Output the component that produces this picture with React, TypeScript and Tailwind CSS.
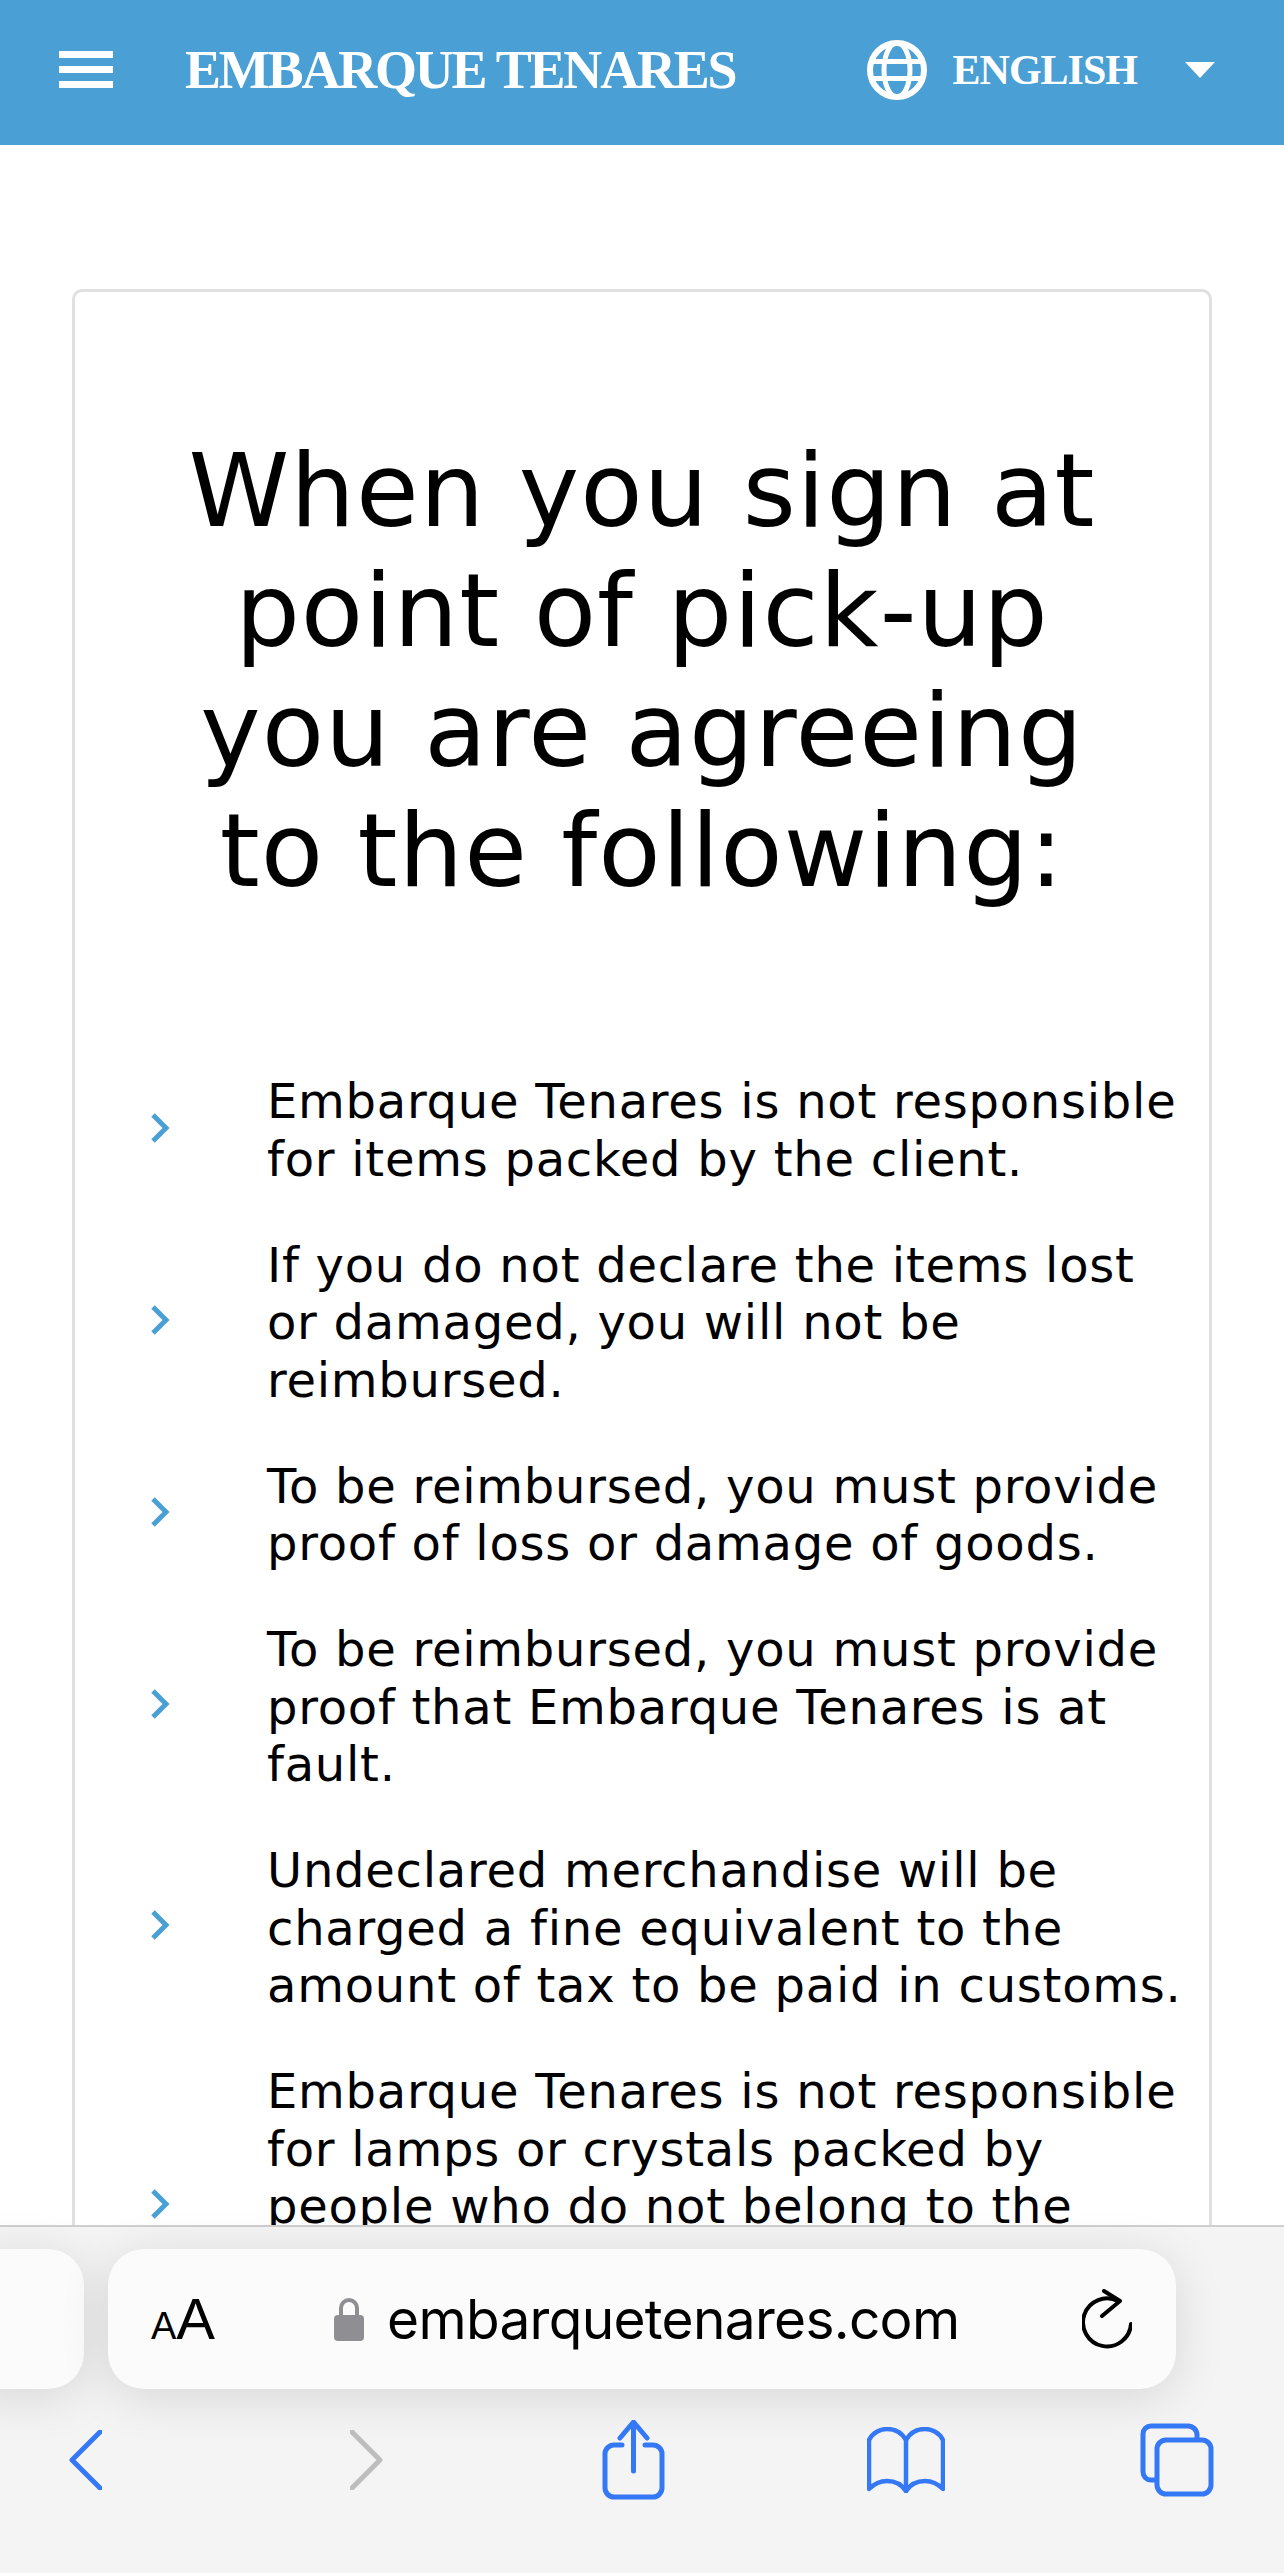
const terms = [
  'Embarque Tenares is not responsible for items packed by the client.',
  'If you do not declare the items lost or damaged, you will not be reimbursed.',
  'To be reimbursed, you must provide proof of loss or damage of goods.',
  'To be reimbursed, you must provide proof that Embarque Tenares is at fault.',
  'Undeclared merchandise will be charged a fine equivalent to the amount of tax to be paid in customs.',
  'Embarque Tenares is not responsible for lamps or crystals packed by people who do not belong to the company, nor for any damage caused by them during packing.',
];

function Globe() {
  return (
    <svg viewBox="0 0 60 60" className="h-[60px] w-[60px]" fill="none" stroke="white" strokeWidth="5">
      <circle cx="30" cy="30" r="27" strokeWidth="6" />
      <ellipse cx="30" cy="30" rx="13" ry="27" />
      <path d="M5 21.500h50M5 38.500h50" />
    </svg>
  );
}

function Chevron() {
  return (
    <svg viewBox="0 0 20 30" className="h-[30px] w-[20px] shrink-0 -translate-y-[3px]" fill="none" stroke="#4a9fd4" strokeWidth="5">
      <path d="M3 2l13 13L3 28" />
    </svg>
  );
}

export default function App() {
  return (
    <div className="flex h-[2573px] w-[1284px] flex-col overflow-hidden bg-white font-['DejaVu_Sans',sans-serif] text-black">
      <header className="flex h-[145px] shrink-0 items-center bg-[#4a9fd4] pb-[6px] text-white">
        <div className="ml-[59px] flex w-[54px] flex-col gap-[8px]">
          <span className="h-[7px] bg-white" />
          <span className="h-[7px] bg-white" />
          <span className="h-[7px] bg-white" />
        </div>
        <span className="ml-[72px] font-['Liberation_Serif',serif] text-[54px] font-bold leading-none tracking-[-2.2px] whitespace-nowrap">
          EMBARQUE TENARES
        </span>
        <div className="ml-auto mr-[69px] flex items-center">
          <Globe />
          <span className="ml-[26px] font-['Liberation_Serif',serif] text-[42px] font-bold leading-none tracking-[-1px]">ENGLISH</span>
          <span className="ml-[48px] h-0 w-0 border-x-[15px] border-t-[16px] border-x-transparent border-t-white" />
        </div>
      </header>

      <main className="min-h-0 flex-1 overflow-hidden pt-[144px]">
        <section className="mx-[72px] rounded-[10px] border-[3px] border-[#e0e0e0] pl-[75px] pr-[20px] pt-[139px]">
          <h1 className="-ml-[75px] -mr-[20px] px-[90px] text-center text-[102px] leading-[120px] font-normal tracking-[1px]">
            When you sign at point of pick-up you are agreeing to the following:
          </h1>
          <ul className="mt-[162px] flex flex-col gap-[48.5px]">
            {terms.map((term) => (
              <li key={term} className="flex items-center gap-[97px]">
                <Chevron />
                <p className="text-[48px] leading-[57.5px] tracking-[0.75px]">{term}</p>
              </li>
            ))}
          </ul>
        </section>
      </main>

      <footer className="flex h-[348px] shrink-0 flex-col border-t-2 border-[#cfcfcf] bg-[#f4f4f5]">
        <div className="mt-[22px] flex h-[140px] gap-[24px]">
          <div className="-ml-[40px] w-[124px] rounded-[36px] bg-[#fbfbfb] shadow-[0_8px_50px_rgba(0,0,0,0.12)]" />
          <div className="flex w-[1068px] items-center rounded-[36px] bg-[#fbfbfb] shadow-[0_8px_50px_rgba(0,0,0,0.12)]">
            <span className="ml-[43px] flex items-baseline font-['Liberation_Sans',sans-serif] leading-none">
              <span className="text-[38px]">A</span>
              <span className="text-[58px]">A</span>
            </span>
            <svg viewBox="0 0 30 44" className="ml-[119px] h-[44px] w-[30px]">
              <path d="M7 20v-9a8 8 0 0 1 16 0v9" fill="none" stroke="#8e8e93" strokeWidth="4" />
              <rect x="0" y="18" width="30" height="26" rx="4" fill="#8e8e93" />
            </svg>
            <span className="ml-[23px] font-['Inter',sans-serif] text-[55px] leading-none tracking-[-0.7px]">embarquetenares.com</span>
            <svg viewBox="0 0 50 60" className="ml-auto mr-[44px] h-[60px] w-[50px]" fill="none" stroke="black" strokeWidth="4" strokeLinecap="round" strokeLinejoin="round">
              <path d="M36 12A24 24 0 1 0 49 35" />
              <path d="M22 2l16 10-18 15" />
            </svg>
          </div>
        </div>
        <nav className="mt-[31px] flex h-[80px] items-center">
          <svg viewBox="0 0 33 60" className="ml-[69px] h-[60px] w-[33px]" fill="none" stroke="#3478f6" strokeWidth="5" strokeLinecap="round" strokeLinejoin="round">
            <path d="M31 2L3 30l28 28" />
          </svg>
          <svg viewBox="0 0 33 60" className="ml-[248px] h-[60px] w-[33px]" fill="none" stroke="#bdbdbd" strokeWidth="5" strokeLinecap="round" strokeLinejoin="round">
            <path d="M2 2l28 28L2 58" />
          </svg>
          <svg viewBox="0 0 63 80" className="ml-[219px] h-[80px] w-[63px]" fill="none" stroke="#3478f6" strokeWidth="5" strokeLinecap="round" strokeLinejoin="round">
            <path d="M20 25H12a9 9 0 0 0-9 9v34a9 9 0 0 0 9 9h39a9 9 0 0 0 9-9V34a9 9 0 0 0-9-9h-8" />
            <path d="M31.500 51V3M18 18L31.500 2 45 18" />
          </svg>
          <svg viewBox="0 0 78 66" className="ml-[202px] h-[66px] w-[78px]" fill="none" stroke="#3478f6" strokeWidth="4.500" strokeLinecap="round" strokeLinejoin="round">
            <path d="M2 62V13C6 5 14 2 20 2 28 2 35 6 39 13 43 6 50 2 58 2 64 2 72 5 76 13V62C70 56 64 54 58 54 50 54 43 58 39 64 35 58 28 54 20 54 14 54 8 56 2 62Z" />
            <path d="M39 13V64" />
          </svg>
          <svg viewBox="0 0 74 74" className="ml-[195px] h-[74px] w-[74px]" fill="none" stroke="#3478f6" strokeWidth="5">
            <path d="M17 57H11a8 8 0 0 1-8-8V11a8 8 0 0 1 8-8h37a9 9 0 0 1 9 9v5" />
            <rect x="17" y="17" width="54" height="54" rx="9" />
          </svg>
        </nav>
      </footer>
    </div>
  );
}
